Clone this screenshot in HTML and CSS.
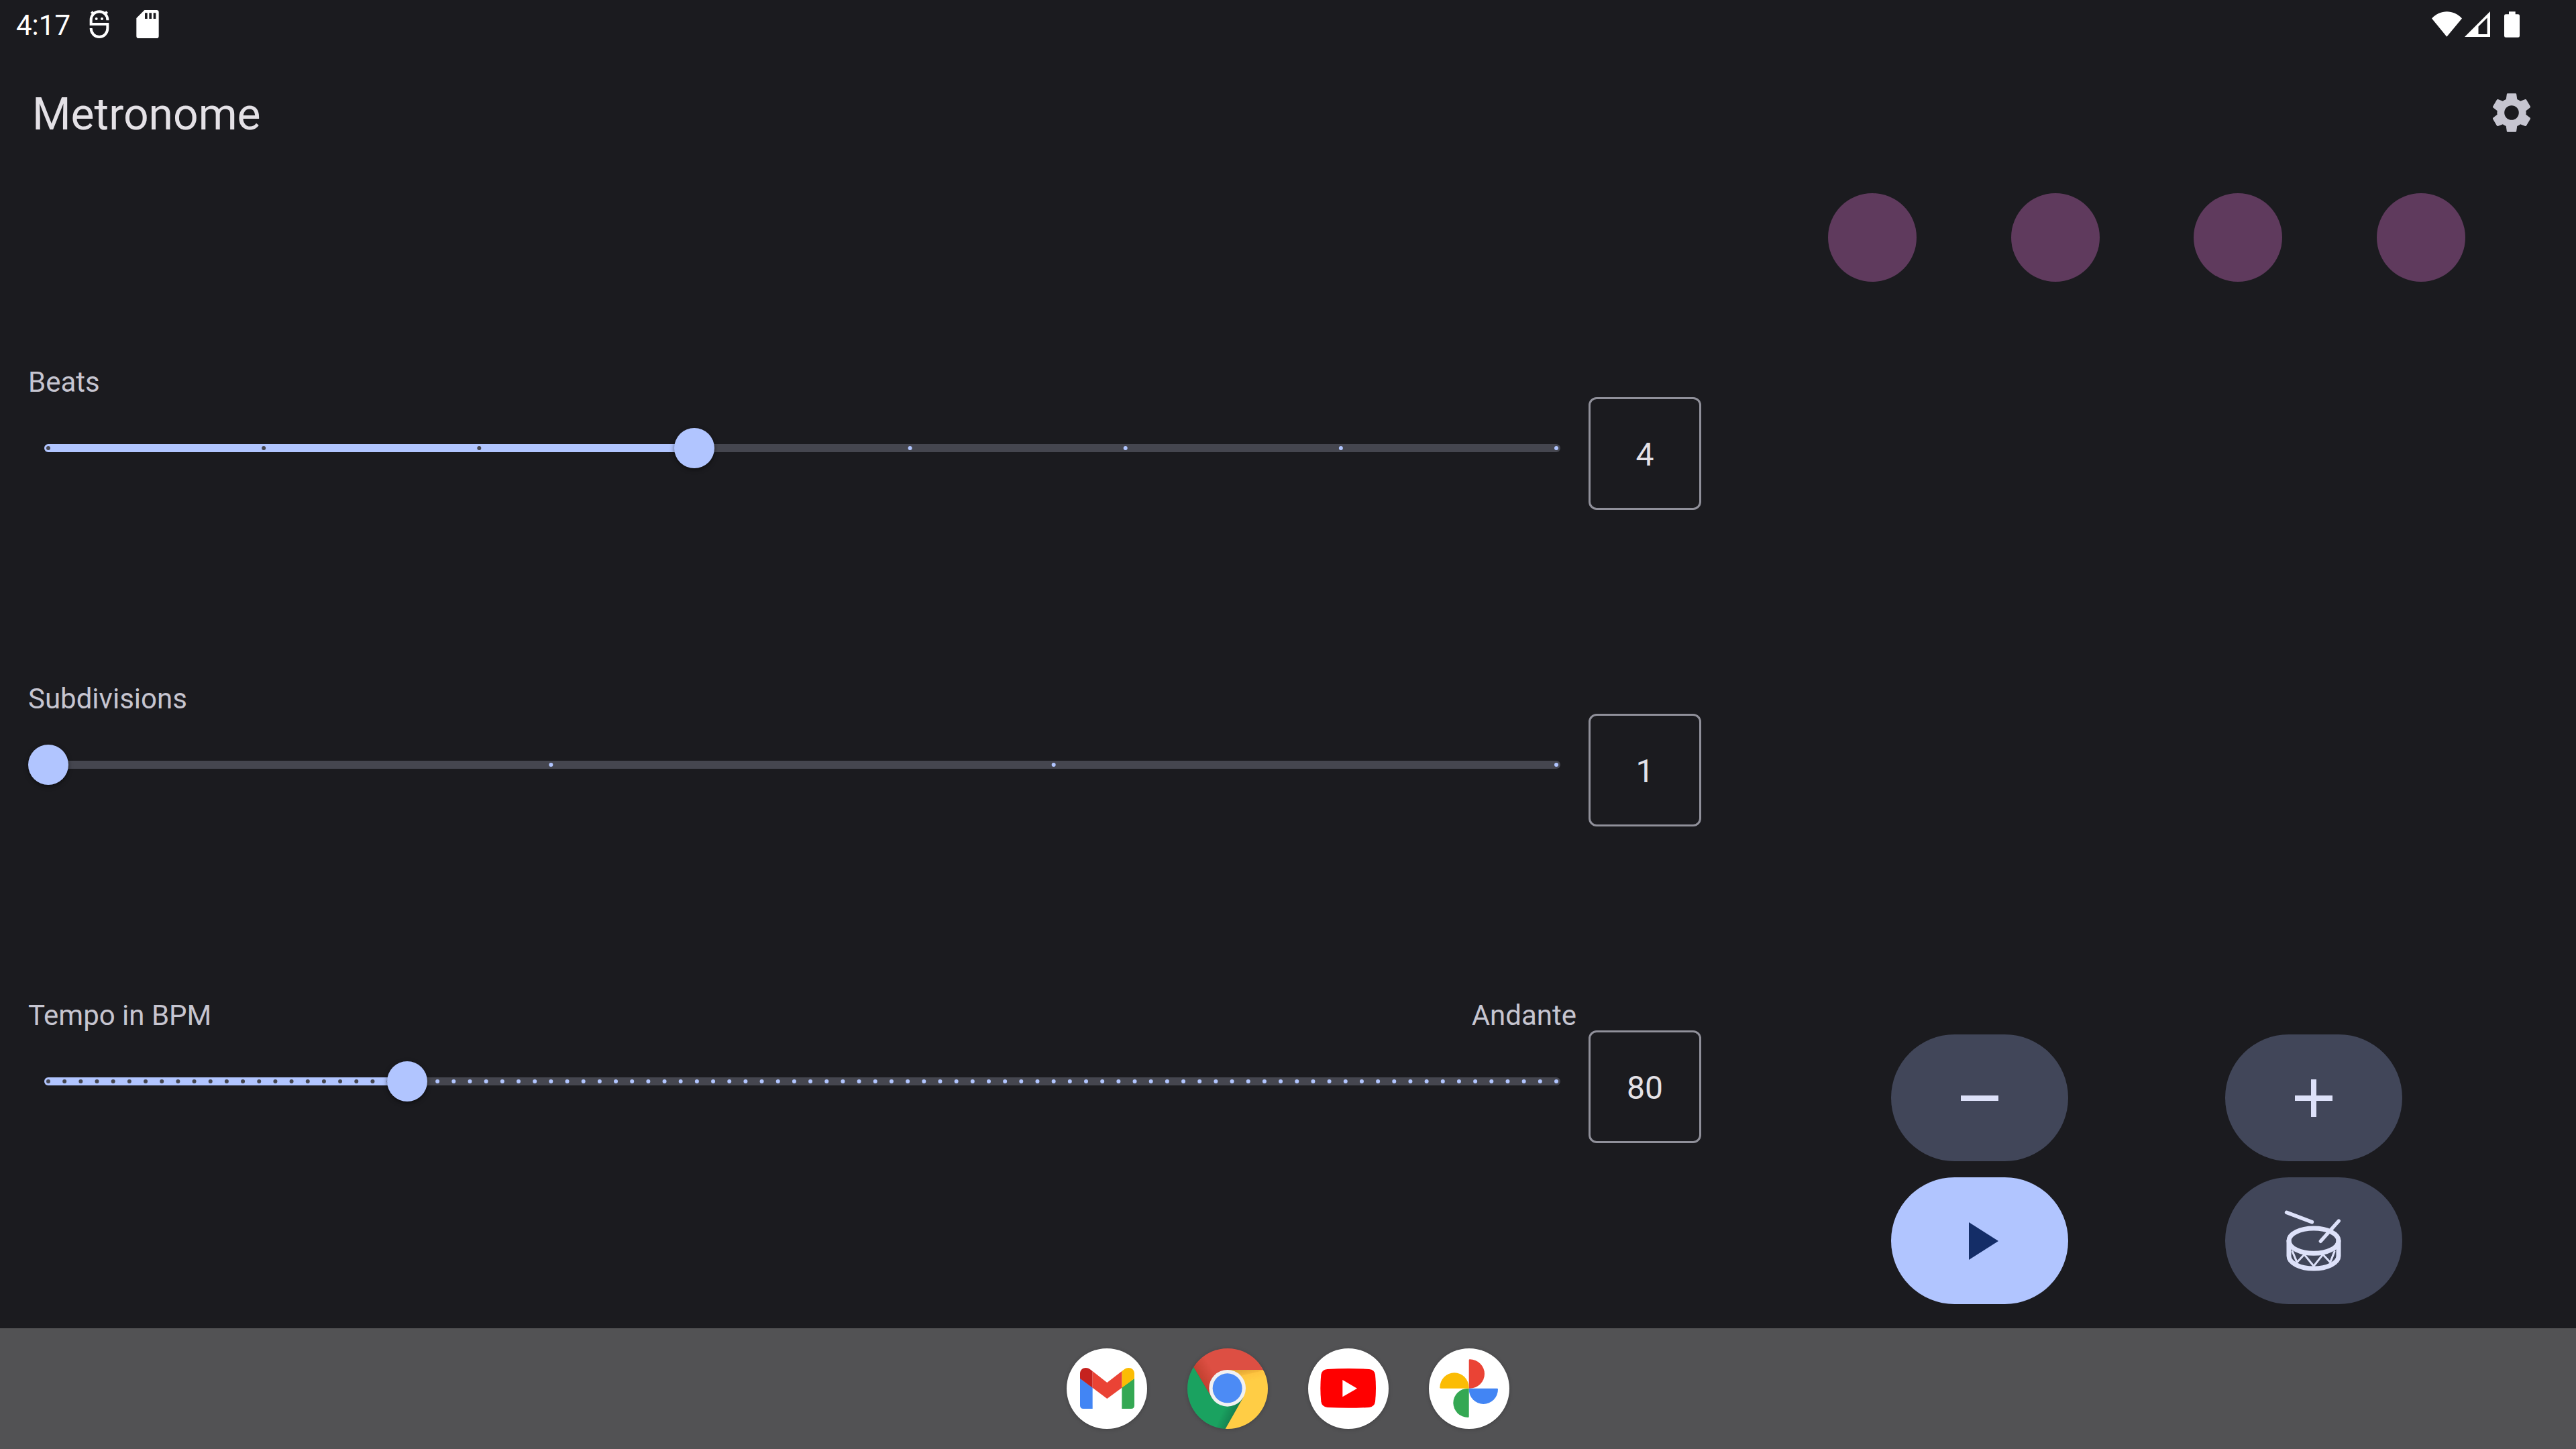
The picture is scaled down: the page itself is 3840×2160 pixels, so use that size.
FILE: index.html
```html
<!DOCTYPE html>
<html lang="en">
<head>
<meta charset="utf-8">
<title>Metronome</title>
<meta name="viewport" content="width=device-width, initial-scale=1">
<link rel="stylesheet" href="styles.css">
</head>
<body>
<div class="screen">
  <div class="status">
    <time class="clock">4:17</time>
    <div class="notices">
      <svg class="notice-bug" viewBox="0 0 90 126" aria-hidden="true">
        <path d="M82 46V44A37 37 0 0 0 8 44V63H82V82A37 38 0 0 1 8 82V81M20 18L10 8M70 18L80 8" fill="none" stroke="#fff" stroke-width="12"/>
        <circle cx="32" cy="39" r="6" fill="#fff"/><circle cx="57" cy="39" r="6" fill="#fff"/>
      </svg>
      <svg class="notice-card" viewBox="0 0 100 126" aria-hidden="true">
        <path fill="#fff" fill-rule="evenodd" d="M36 0H90q10 0 10 10V116q0 10-10 10H10q-10 0-10-10V36ZM38 13V39H49V13ZM57 13V39H68V13ZM76 13V39H87V13Z"/>
      </svg>
    </div>
    <div class="signals">
      <svg class="signal-wifi" viewBox="0 0 135 113" aria-hidden="true"><path fill="#fff" d="M0 31C38-10 97-10 135 31L67 113Z"/></svg>
      <svg class="signal-cell" viewBox="0 0 113 113" aria-hidden="true"><path fill="#fff" fill-rule="evenodd" d="M113 0V113H0ZM100 28L61 67V101H100Z"/></svg>
      <svg class="signal-battery" viewBox="0 0 69 116" aria-hidden="true"><path fill="#fff" d="M21 0H50V12H62q7 0 7 7V109q0 7-7 7H7q-7 0-7-7V19q0-7 7-7H21Z"/></svg>
    </div>
  </div>

  <header class="appbar">
    <h1 class="title">Metronome</h1>
    <button class="settings" type="button" aria-label="Settings">
      <svg viewBox="0 0 24 24"><path fill="currentColor" d="M19.14 12.94c.04-.3.06-.61.06-.94 0-.32-.02-.64-.07-.94l2.03-1.58c.18-.14.23-.41.12-.61l-1.92-3.32c-.12-.22-.37-.29-.59-.22l-2.39.96c-.5-.38-1.03-.7-1.62-.94l-.36-2.54c-.04-.24-.24-.41-.48-.41h-3.84c-.24 0-.43.17-.47.41l-.36 2.54c-.59.24-1.13.57-1.62.94l-2.39-.96c-.22-.08-.47 0-.59.22L2.74 8.87c-.12.21-.08.47.12.61l2.03 1.58c-.05.3-.09.63-.09.94s.02.64.07.94l-2.03 1.58c-.18.14-.23.41-.12.61l1.92 3.32c.12.22.37.29.59.22l2.39-.96c.5.38 1.03.7 1.62.94l.36 2.54c.05.24.24.41.48.41h3.84c.24 0 .44-.17.47-.41l.36-2.54c.59-.24 1.13-.56 1.62-.94l2.39.96c.22.08.47 0 .59-.22l1.92-3.32c.12-.22.07-.47-.12-.61zM12 15.6A3.6 3.6 0 1 1 12 8.4a3.6 3.6 0 0 1 0 7.2z"/></svg>
    </button>
  </header>

  <main class="content">
    <section class="sliders">
      <div class="row">
        <div class="caption"><label for="beats">Beats</label></div>
        <div class="slider" data-ticks="8">
          <div class="rail"><div class="fill"></div></div>
          <svg class="ticks" aria-hidden="true"></svg>
          <input class="range" id="beats" type="range" min="1" max="8" value="4">
        </div>
        <input class="value" type="text" inputmode="numeric" value="4" aria-label="Beats value">
      </div>
      <div class="row">
        <div class="caption"><label for="subdivisions">Subdivisions</label></div>
        <div class="slider" data-ticks="4">
          <div class="rail"><div class="fill"></div></div>
          <svg class="ticks" aria-hidden="true"></svg>
          <input class="range" id="subdivisions" type="range" min="1" max="4" value="1">
        </div>
        <input class="value" type="text" inputmode="numeric" value="1" aria-label="Subdivisions value">
      </div>
      <div class="row">
        <div class="caption"><label for="tempo">Tempo in BPM</label><span>Andante</span></div>
        <div class="slider" data-ticks="94">
          <div class="rail"><div class="fill"></div></div>
          <svg class="ticks" aria-hidden="true"></svg>
          <input class="range" id="tempo" type="range" min="40" max="208" value="80">
        </div>
        <input class="value" type="text" inputmode="numeric" value="80" aria-label="Tempo value">
      </div>
    </section>

    <section class="side">
      <div class="beats"><i class="beat"></i><i class="beat"></i><i class="beat"></i><i class="beat"></i></div>
      <div class="actions">
        <div class="action-row">
          <button class="action" type="button" aria-label="Slower"><svg viewBox="0 0 24 24"><path fill="currentColor" d="M5 11H19V13H5Z"/></svg></button>
          <button class="action" type="button" aria-label="Faster"><svg viewBox="0 0 24 24"><path fill="currentColor" d="M19 13H13V19H11V13H5V11H11V5H13V11H19Z"/></svg></button>
        </div>
        <div class="action-row">
          <button class="action action-play" type="button" aria-label="Play"><svg viewBox="0 0 24 24"><path fill="currentColor" d="M8 5V19L19 12Z"/></svg></button>
          <button class="action" type="button" aria-label="Tap tempo">
            <svg viewBox="0 0 288 288" fill="none" stroke="currentColor" stroke-linecap="round">
              <ellipse cx="144" cy="143" rx="111" ry="56" stroke-width="21"/>
              <path d="M33 143V211A111 56 0 0 0 255 211V143" stroke-width="21"/>
              <path d="M49 191L69 239L102 204L144 256L185 204L218 239L237 191" stroke-width="9"/>
              <path d="M23 16L136 59" stroke-width="17"/><path d="M256 54L175 145" stroke-width="16"/>
            </svg>
          </button>
        </div>
      </div>
    </section>
  </main>

  <nav class="dock" aria-label="Apps">
    <a class="app" href="#gmail" aria-label="Gmail">
      <svg viewBox="0 0 360 360">
        <circle cx="180" cy="180" r="180" fill="#fff"/>
        <path fill="#4285f4" d="M60 134L116 175V270H75Q60 270 60 255Z"/>
        <path fill="#34a853" d="M303 134L247 175V270H288Q303 270 303 255Z"/>
        <path fill="#c5221f" d="M60 135V113C60 90 86 79 105 94L116 102V176Z"/>
        <path fill="#fbbc04" d="M303 135V113C303 90 277 79 258 94L247 102V176Z"/>
        <path fill="#ea4335" d="M116 102L181 153L247 102V176L181 225L116 176Z"/>
      </svg>
    </a>
    <a class="app" href="#chrome" aria-label="Chrome">
      <svg viewBox="0 0 360 360">
        <defs>
          <clipPath id="disc"><circle cx="180" cy="180" r="180"/></clipPath>
          <linearGradient id="red" gradientUnits="userSpaceOnUse" x1="66" y1="150" x2="124" y2="116"><stop offset="0" stop-color="#c2402f"/><stop offset="1" stop-color="#dd4f43"/></linearGradient>
          <linearGradient id="yellow" gradientUnits="userSpaceOnUse" x1="225" y1="96" x2="239" y2="156"><stop offset="0" stop-color="#dfa334"/><stop offset=".45" stop-color="#f5b93a"/><stop offset=".5" stop-color="#fec440"/><stop offset="1" stop-color="#ffcd45"/></linearGradient>
          <linearGradient id="green" gradientUnits="userSpaceOnUse" x1="214" y1="284" x2="166" y2="262"><stop offset="0" stop-color="#148150"/><stop offset="1" stop-color="#1aa260"/></linearGradient>
        </defs>
        <g clip-path="url(#disc)">
          <path fill="url(#red)" d="M0 0H360V96H179L108 219L28 84L0 36Z"/>
          <path fill="url(#green)" d="M0 36L28 84L108 219L179 178L250 219L170 360H0Z"/>
          <path fill="url(#yellow)" d="M179 96H360V360H170L250 219L179 178Z"/>
        </g>
        <circle cx="179" cy="178" r="82" fill="#f1f1f1"/>
        <circle cx="179" cy="178" r="66" fill="#4c8bf5"/>
      </svg>
    </a>
    <a class="app" href="#youtube" aria-label="YouTube">
      <svg viewBox="0 0 360 360">
        <circle cx="180" cy="180" r="180" fill="#fff"/>
        <path fill="#f00" d="M86 93Q180 87 273 93Q297 95 300 118Q306 178 300 238Q297 261 273 264Q180 269 86 264Q61 261 58 238Q52 178 58 118Q61 95 86 93Z"/>
        <path fill="#fff" d="M154 141V217L219 179Z"/>
      </svg>
    </a>
    <a class="app" href="#photos" aria-label="Photos">
      <svg viewBox="0 0 360 360">
        <circle cx="180" cy="180" r="180" fill="#fff"/>
        <path fill="#ea4335" d="M179 179V53q0-4 4-4a66 65 0 0 1 0 130z"/>
        <path fill="#4285f4" transform="rotate(90 179 179)" d="M179 179V53q0-4 4-4a66 65 0 0 1 0 130z"/>
        <path fill="#34a853" transform="rotate(180 179 179)" d="M179 179V53q0-4 4-4a66 65 0 0 1 0 130z"/>
        <path fill="#fbbc04" transform="rotate(270 179 179)" d="M179 179V53q0-4 4-4a66 65 0 0 1 0 130z"/>
      </svg>
    </a>
  </nav>
</div>
<script src="script.js"></script>
</body>
</html>
```
FILE: styles.css
```css
* { box-sizing: border-box; }

:root {
  --background: #1b1b1f;
  --on-background: #e4e1e6;
  --muted: #c6c5d0;
  --primary: #b1c5ff;
  --on-primary: #142d67;
  --secondary: #414659;
  --on-secondary: #dde1f9;
  --track: #45464f;
  --outline: #90909a;
  --beat: #5f3a5d;
}

body {
  margin: 0;
  background: var(--background);
  color: var(--on-background);
  font-family: Roboto, "Noto Sans", sans-serif;
}

svg { display: block; }
button { border: 0; padding: 0; font: inherit; cursor: pointer; }

.screen { min-height: 100vh; display: flex; flex-direction: column; }

/* Status bar */
.status { display: flex; align-items: center; height: 72px; padding: 0 84px 0 24px; color: #fff; }
.clock { padding-top: 3px; font-size: 42px; line-height: 60px; }
.notices { display: flex; gap: 40px; margin-left: 28px; }
.notice-bug { width: 30px; height: 42px; }
.notice-card { width: 34px; height: 42px; }
.signals { display: flex; align-items: center; gap: 4px; margin-left: auto; }
.signal-wifi { width: 45px; height: 38px; }
.signal-cell { width: 38px; height: 38px; }
.signal-battery { width: 23px; height: 39px; margin-left: 17px; }

/* App bar */
.appbar { display: flex; align-items: center; justify-content: space-between; height: 192px; padding: 0 60px 0 48px; }
.title { margin: 0; padding-top: 6px; font-size: 66px; line-height: 84px; font-weight: 400; }
.settings { background: none; color: var(--muted); }
.settings svg { width: 72px; height: 72px; }

.content { flex: 1; display: grid; grid-template-columns: 2fr 1fr; }

/* Slider rows */
.sliders { display: flex; flex-direction: column; justify-content: space-between; gap: 48px; padding: 276px 24px 276px 42px; }
.row { display: grid; grid-template-columns: 1fr 168px; grid-template-rows: 60px 160px; column-gap: 18px; }
.caption { display: flex; justify-content: space-between; color: var(--muted); font-size: 42px; line-height: 60px; }
.value {
  grid-column: 2; grid-row: 1 / 3; align-self: end;
  width: 168px; height: 168px; padding: 3px 0 0;
  border: 3px solid var(--outline); border-radius: 12px;
  background: none; color: var(--on-background);
  font: inherit; font-size: 48px; text-align: center;
}

.slider { display: grid; height: 136px; align-items: center; }
.slider > * { grid-area: 1 / 1; }
.rail { height: 12px; margin: 0 24px; border-radius: 6px; background: var(--track); overflow: hidden; }
.fill { height: 12px; background: var(--primary); }
.ticks { width: calc(100% - 60px); height: 6px; margin: 0 30px; overflow: visible; }
.tick { fill: var(--primary); }
.tick-on { fill: var(--track); }
.range { -webkit-appearance: none; appearance: none; position: relative; width: 100%; height: 60px; margin: 0; background: none; }
.range::-webkit-slider-thumb {
  -webkit-appearance: none;
  width: 60px; height: 60px; border: 0; border-radius: 50%;
  background: var(--primary); box-shadow: 0 2px 6px rgba(0, 0, 0, .5);
}
.range::-moz-range-thumb { width: 60px; height: 60px; border: 0; border-radius: 50%; background: var(--primary); }

/* Beat lights and buttons */
.side { display: flex; flex-direction: column; justify-content: space-between; padding: 24px 24px 36px; }
.beats { display: flex; justify-content: space-evenly; }
.beat { width: 132px; height: 132px; border-radius: 50%; background: var(--beat); }
.actions { display: flex; flex-direction: column; gap: 24px; }
.action-row { display: flex; justify-content: space-evenly; }
.action { display: grid; place-items: center; width: 264px; height: 189px; border-radius: 95px; background: var(--secondary); color: var(--on-secondary); }
.action svg { width: 96px; height: 96px; }
.action-play { background: var(--primary); color: var(--on-primary); }

/* Dock */
.dock { display: flex; justify-content: center; align-items: center; gap: 60px; height: 180px; background: #525254; }
.app { border-radius: 50%; box-shadow: 0 1px 6px rgba(0, 0, 0, .2); }
.app svg { width: 120px; height: 120px; }
```
FILE: script.js
```js
// Draws each slider's tick marks and keeps its fill and number box in step.
document.querySelectorAll('.row').forEach(function (row) {
  var slider = row.querySelector('.slider');
  var range = row.querySelector('.range');
  var ticks = row.querySelector('.ticks');
  var fill = row.querySelector('.fill');
  var value = row.querySelector('.value');
  var last = Number(slider.dataset.ticks) - 1;

  for (var i = 0; i <= last; i++) {
    var dot = document.createElementNS('http://www.w3.org/2000/svg', 'circle');
    dot.setAttribute('cx', (i / last * 100) + '%');
    dot.setAttribute('cy', '50%');
    dot.setAttribute('r', '3');
    ticks.appendChild(dot);
  }

  function update() {
    var part = (range.value - range.min) / (range.max - range.min);
    fill.style.width = 'calc((100% - 12px) * ' + part + ' + 6px)';
    Array.prototype.forEach.call(ticks.children, function (dot, n) {
      dot.setAttribute('class', n / last <= part ? 'tick-on' : 'tick');
    });
  }

  range.addEventListener('input', function () {
    value.value = range.value;
    update();
  });
  value.addEventListener('change', function () {
    range.value = value.value;
    value.value = range.value;
    update();
  });
  update();
});
```
